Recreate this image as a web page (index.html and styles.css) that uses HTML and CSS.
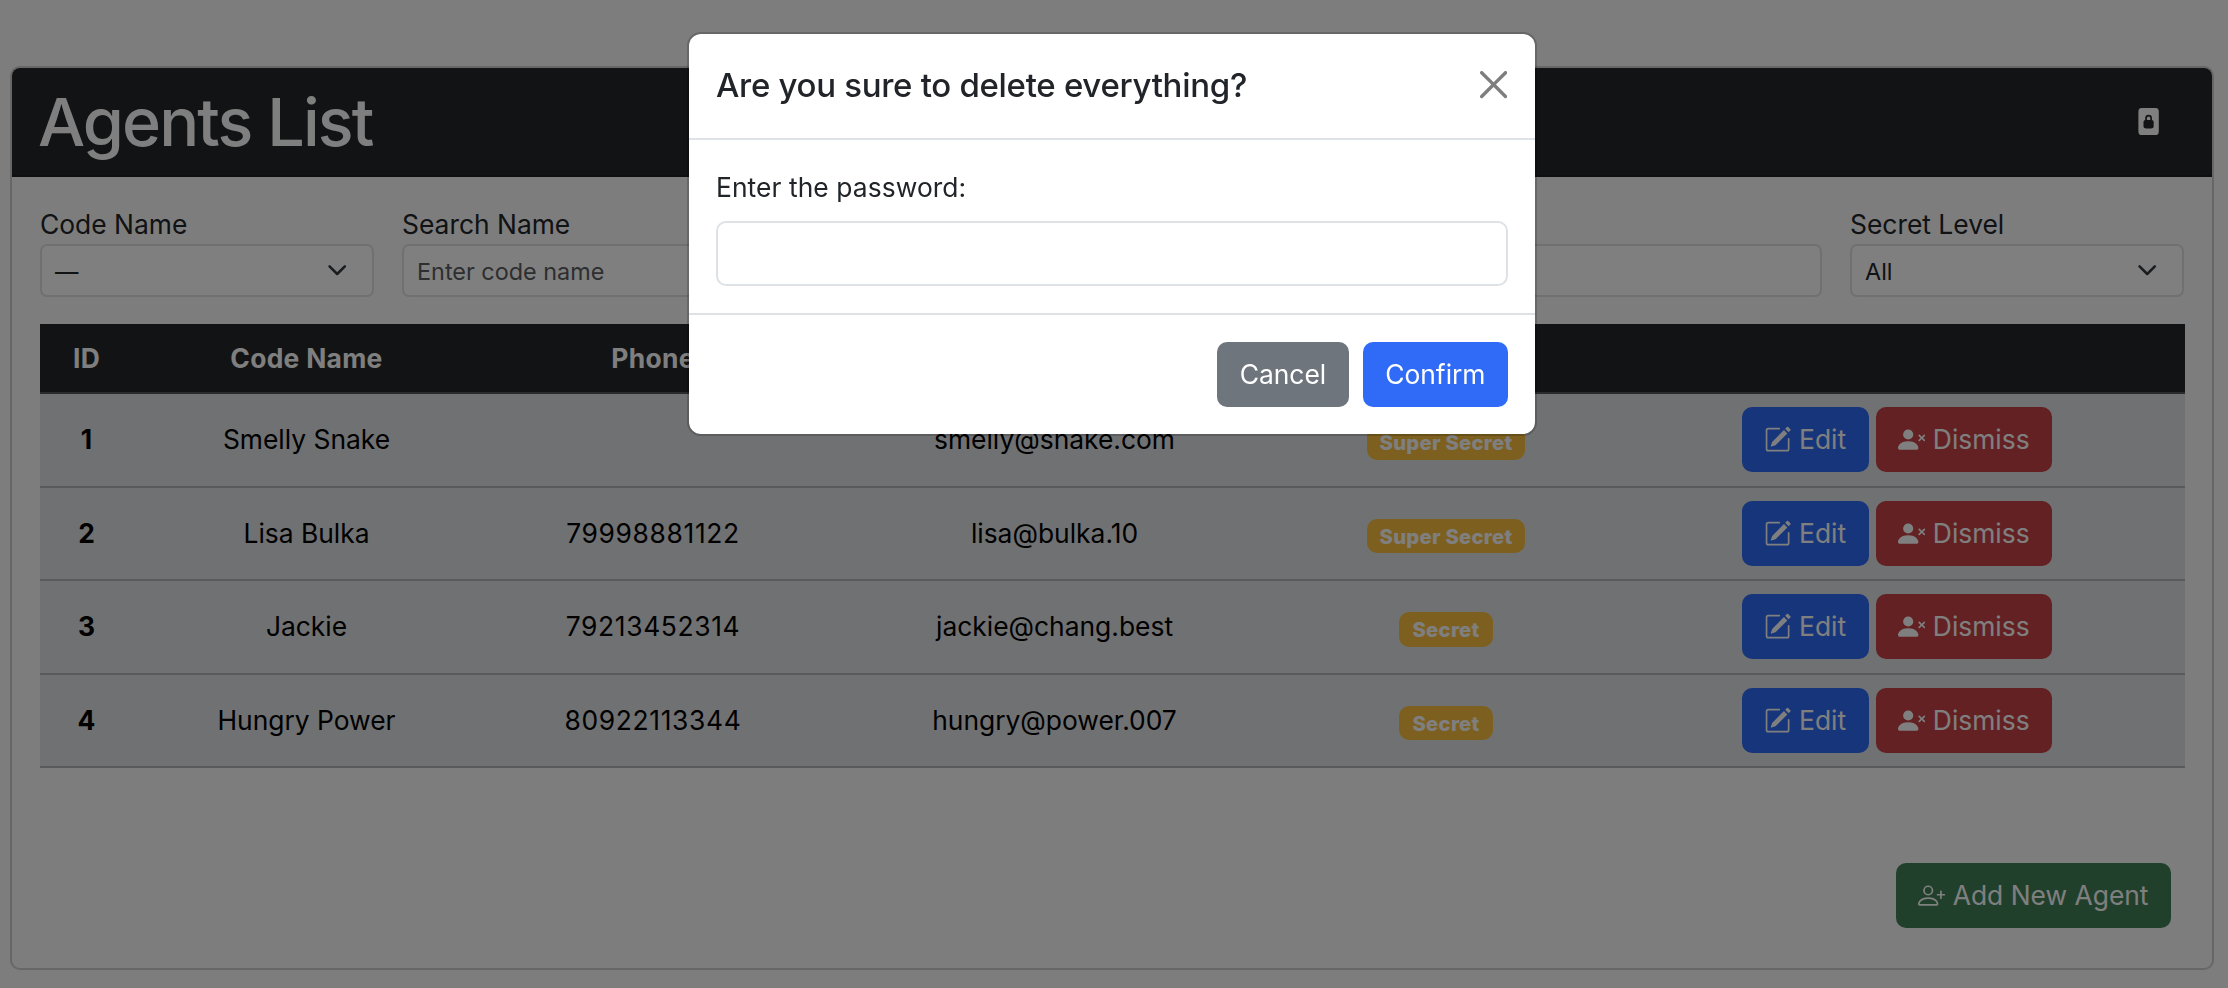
FILE: index.html
```html
<!DOCTYPE html>
<html lang="en">
<head>
<meta charset="utf-8">
<title>Agents List</title>
<link rel="stylesheet" href="styles.css">
</head>
<body>
<svg class="sprite" aria-hidden="true">
  <symbol id="i-edit" viewBox="0 0 16 16"><path d="M15.502 1.94a.5.5 0 0 1 0 .706L14.459 3.69l-2-2L13.502.646a.5.5 0 0 1 .707 0l1.293 1.293zm-1.75 2.456-2-2L4.939 9.21a.5.5 0 0 0-.121.196l-.805 2.414a.25.25 0 0 0 .316.316l2.414-.805a.5.5 0 0 0 .196-.12z"/><path fill-rule="evenodd" d="M1 13.5A1.5 1.5 0 0 0 2.5 15h11a1.5 1.5 0 0 0 1.5-1.5v-6a.5.5 0 0 0-1 0v6a.5.5 0 0 1-.5.5h-11a.5.5 0 0 1-.5-.5v-11a.5.5 0 0 1 .5-.5H9a.5.5 0 0 0 0-1H2.5A1.5 1.5 0 0 0 1 2.5z"/></symbol>
  <symbol id="i-dismiss" viewBox="0 0 16 16"><path fill-rule="evenodd" d="M1 14s-1 0-1-1 1-4 6-4 6 3 6 4-1 1-1 1zm5-6a3 3 0 1 0 0-6 3 3 0 0 0 0 6m6.146-2.854a.5.5 0 0 1 .708 0L14 6.293l1.146-1.147a.5.5 0 0 1 .708.708L14.707 7l1.147 1.146a.5.5 0 0 1-.708.708L14 7.707l-1.146 1.147a.5.5 0 0 1-.708-.708L13.293 7l-1.147-1.146a.5.5 0 0 1 0-.708"/></symbol>
  <symbol id="i-add" viewBox="0 0 16 16"><path d="M6 8a3 3 0 1 0 0-6 3 3 0 0 0 0 6m2-3a2 2 0 1 1-4 0 2 2 0 0 1 4 0m4 8c0 1-1 1-1 1H1s-1 0-1-1 1-4 6-4 6 3 6 4m-1-.004c-.001-.246-.154-.986-.832-1.664C9.516 10.68 8.289 10 6 10s-3.516.68-4.168 1.332c-.678.678-.83 1.418-.832 1.664z"/><path fill-rule="evenodd" d="M13.5 5a.5.5 0 0 1 .5.5V7h1.5a.5.5 0 0 1 0 1H14v1.5a.5.5 0 0 1-1 0V8h-1.5a.5.5 0 0 1 0-1H13V5.5a.5.5 0 0 1 .5-.5"/></symbol>
  <symbol id="i-chevron" viewBox="0 0 16 16"><path fill="none" stroke="#343a40" stroke-linecap="round" stroke-linejoin="round" stroke-width="2" d="m2 5 6 6 6-6"/></symbol>
</svg>

<section class="card">
  <header class="card-header">
    <h1 class="title">Agents List</h1>
    <svg class="icon lock" viewBox="0 0 16 16"><path d="M7 6a1 1 0 0 1 2 0v1H7z"/><path d="M12 0H4a2 2 0 0 0-2 2v12a2 2 0 0 0 2 2h8a2 2 0 0 0 2-2V2a2 2 0 0 0-2-2m-2 6v1.076c.54.166 1 .597 1 1.224v2.4c0 .816-.781 1.3-1.5 1.3h-3c-.719 0-1.5-.484-1.5-1.3V8.3c0-.627.46-1.058 1-1.224V6a2 2 0 1 1 4 0"/></svg>
  </header>

  <div class="filters">
    <div class="filter">
      <span class="label">Code Name</span>
      <div class="control"><span>—</span><svg class="chevron"><use href="#i-chevron"/></svg></div>
    </div>
    <div class="filter wide">
      <span class="label">Search Name</span>
      <div class="control"><span>
        <span class="placeholder">Enter code name</span></span></div>
    </div>
    <div class="filter wide">
      <span class="label"></span>
      <div class="control"></div>
    </div>
    <div class="filter">
      <span class="label">Secret Level</span>
      <div class="control"><span>All</span><svg class="chevron"><use href="#i-chevron"/></svg></div>
    </div>
  </div>

  <div class="table">
    <div class="row head"><span>ID</span><span>Code Name</span><span>Phone</span><span></span><span></span><span></span></div>
    <div class="row"><b>1</b><span>Smelly Snake</span><span></span><span>smelly@snake.com</span><span><span class="badge">Super Secret</span></span>
      <div class="actions"><span class="btn blue"><svg class="icon"><use href="#i-edit"/></svg>Edit</span><span class="btn red"><svg class="icon"><use href="#i-dismiss"/></svg>Dismiss</span></div></div>
    <div class="row"><b>2</b><span>Lisa Bulka</span><span class="num">79998881122</span><span>lisa@bulka.10</span><span><span class="badge">Super Secret</span></span>
      <div class="actions"><span class="btn blue"><svg class="icon"><use href="#i-edit"/></svg>Edit</span><span class="btn red"><svg class="icon"><use href="#i-dismiss"/></svg>Dismiss</span></div></div>
    <div class="row"><b>3</b><span>Jackie</span><span class="num">79213452314</span><span>jackie@chang.best</span><span><span class="badge">Secret</span></span>
      <div class="actions"><span class="btn blue"><svg class="icon"><use href="#i-edit"/></svg>Edit</span><span class="btn red"><svg class="icon"><use href="#i-dismiss"/></svg>Dismiss</span></div></div>
    <div class="row"><b>4</b><span>Hungry Power</span><span class="num">80922113344</span><span>hungry@power.007</span><span><span class="badge">Secret</span></span>
      <div class="actions"><span class="btn blue"><svg class="icon"><use href="#i-edit"/></svg>Edit</span><span class="btn red"><svg class="icon"><use href="#i-dismiss"/></svg>Dismiss</span></div></div>
  </div>

  <div class="card-foot"><span class="btn green"><svg class="icon"><use href="#i-add"/></svg>Add New Agent</span></div>
</section>

<div class="backdrop">
  <div class="modal">
    <div class="modal-header">
      <h2 class="modal-title">Are you sure to delete everything?</h2>
      <svg class="icon close" viewBox="0 0 16 16"><path d="M.293.293a1 1 0 0 1 1.414 0L8 6.586 14.293.293a1 1 0 1 1 1.414 1.414L9.414 8l6.293 6.293a1 1 0 0 1-1.414 1.414L8 9.414l-6.293 6.293a1 1 0 0 1-1.414-1.414L6.586 8 .293 1.707a1 1 0 0 1 0-1.414z"/></svg>
    </div>
    <div class="modal-body">
      <span class="modal-label">Enter the password:</span>
      <input class="password" type="password">
    </div>
    <div class="modal-footer">
      <span class="btn gray">Cancel</span>
      <span class="btn blue">Confirm</span>
    </div>
  </div>
</div>
</body>
</html>
```
FILE: styles.css
```css
* { box-sizing: border-box; }

body {
  margin: 0;
  height: 988px;
  padding: 66px 14px 0 10px;
  overflow: hidden;
  background: #fafafa;
  color: #212529;
  font: 400 26.4px/41px Inter, "Liberation Sans", sans-serif;
}

.sprite { position: absolute; width: 0; height: 0; }
.icon { width: 27.2px; height: 27.2px; fill: currentColor; flex: none; }

.card {
  height: 904px;
  border: 2px solid #cfcfd0;
  border-radius: 10px;
  overflow: hidden;
}

.card-header {
  display: flex;
  align-items: center;
  justify-content: space-between;
  height: 109px;
  padding: 0 50px 0 26px;
  background: #242629;
  border-bottom: 2px solid #1c1e20;
  color: #fff;
}
.title { margin: 0; font-size: 66.5px; line-height: 80px; font-weight: 500; letter-spacing: -1.9px; }

.filters {
  display: grid;
  grid-template-columns: repeat(6, 1fr);
  column-gap: 28px;
  padding: 27px 28px 0;
}
.wide { grid-column: span 2; }
.label { display: block; height: 40px; line-height: 40px; }
.control {
  display: flex;
  align-items: center;
  justify-content: space-between;
  height: 53px;
  padding: 0 25px 0 13px;
  background: #fff;
  border: 2px solid #dee0e3;
  border-radius: 7px;
  font-size: 23.4px;
}
.control > span { padding-top: 2px; }
.placeholder { color: #5a5d61; }
.chevron { width: 20.4px; height: 20.4px; }

.table { margin: 27px 27px 0 28px; color: #000; }
.row {
  display: grid;
  grid-template-columns: 93px 347px 346px 457px 326px 1fr;
  align-items: center;
  justify-items: center;
  height: 93.5px;
  background: #e0e2e4;
  border-bottom: 2px solid #b3b5b6;
}
.head {
  height: 70px;
  background: #242629;
  border-bottom-color: #54565a;
  color: #fff;
  font-weight: 700;
  letter-spacing: .3px;
}
.row b { font-weight: 700; }
.num { letter-spacing: .65px; }
.badge {
  display: block;
  height: 34.5px;
  margin-top: 5px;
  padding: 0 13px;
  background: #fac040;
  border-radius: 10px;
  color: #fff;
  font-size: 20.3px;
  font-weight: 800;
  letter-spacing: .25px;
  line-height: 35px;
}

.actions { display: flex; gap: 7px; }
.btn {
  display: flex;
  align-items: center;
  gap: 7.5px;
  height: 64.6px;
  padding: 0 22.5px;
  border-radius: 10px;
  color: #fff;
  white-space: nowrap;
}
.blue { background: #2f6bf6; }
.red { background: #c64246; }
.green { background: #428058; }
.gray { background: #6e757d; }

.card-foot { display: flex; justify-content: flex-end; padding: 95px 41px 0 0; }

.backdrop { position: fixed; inset: 0; background: rgba(0, 0, 0, .5); }
.modal {
  width: 850px;
  height: 404px;
  margin: 32px 0 0 687px;
  background: #fff;
  background-clip: padding-box;
  border: 2px solid rgba(0, 0, 0, .175);
  border-radius: 14px;
}
.modal-header {
  display: flex;
  align-items: center;
  justify-content: space-between;
  height: 106px;
  padding: 0 28px 2px 27px;
  border-bottom: 2px solid #dee2e6;
}
.modal-title { margin: 0; font-size: 33px; line-height: 51px; font-weight: 500; letter-spacing: -.3px; }
.close { color: #000; opacity: .5; }
.modal-body { height: 173px; padding: 27px 27px 0; }
.modal-label { display: block; height: 54px; line-height: 41px; letter-spacing: .07px; }
.password {
  display: block;
  width: 100%;
  height: 65px;
  border: 2px solid #dee2e6;
  border-radius: 10px;
  background: #fff;
}
.modal-footer {
  display: flex;
  justify-content: flex-end;
  gap: 14px;
  padding: 27px 27px 0;
  border-top: 2px solid #dee2e6;
}
```
